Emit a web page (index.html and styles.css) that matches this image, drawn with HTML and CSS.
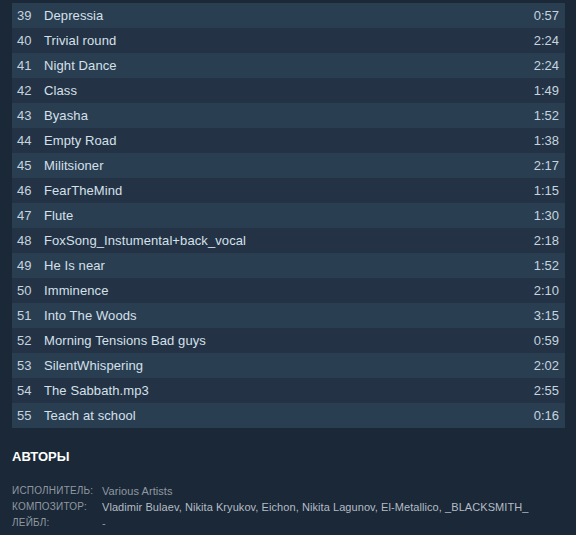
FILE: index.html
```html
<!DOCTYPE html>
<html>
<head>
	<meta charset="utf-8">
	<title>Soundtrack</title>
	<link rel="stylesheet" href="styles.css">
</head>
<body>

<div class='page'>
	<table class='tracks'>
		<tbody>
			<tr><td class='num'>39</td><td class='title'>Depressia</td><td class='len'>0:57</td></tr>
			<tr><td class='num'>40</td><td class='title'>Trivial round</td><td class='len'>2:24</td></tr>
			<tr><td class='num'>41</td><td class='title'>Night Dance</td><td class='len'>2:24</td></tr>
			<tr><td class='num'>42</td><td class='title'>Class</td><td class='len'>1:49</td></tr>
			<tr><td class='num'>43</td><td class='title'>Byasha</td><td class='len'>1:52</td></tr>
			<tr><td class='num'>44</td><td class='title'>Empty Road</td><td class='len'>1:38</td></tr>
			<tr><td class='num'>45</td><td class='title'>Militsioner</td><td class='len'>2:17</td></tr>
			<tr><td class='num'>46</td><td class='title'>FearTheMind</td><td class='len'>1:15</td></tr>
			<tr><td class='num'>47</td><td class='title'>Flute</td><td class='len'>1:30</td></tr>
			<tr><td class='num'>48</td><td class='title'>FoxSong_Instumental+back_vocal</td><td class='len'>2:18</td></tr>
			<tr><td class='num'>49</td><td class='title'>He Is near</td><td class='len'>1:52</td></tr>
			<tr><td class='num'>50</td><td class='title'>Imminence</td><td class='len'>2:10</td></tr>
			<tr><td class='num'>51</td><td class='title'>Into The Woods</td><td class='len'>3:15</td></tr>
			<tr><td class='num'>52</td><td class='title'>Morning Tensions Bad guys</td><td class='len'>0:59</td></tr>
			<tr><td class='num'>53</td><td class='title'>SilentWhispering</td><td class='len'>2:02</td></tr>
			<tr><td class='num'>54</td><td class='title'>The Sabbath.mp3</td><td class='len'>2:55</td></tr>
			<tr><td class='num'>55</td><td class='title'>Teach at school</td><td class='len'>0:16</td></tr>
		</tbody>
	</table>

	<h3 class='credits-head'>Авторы</h3>

	<div class='credits'>
		<div class='label'>Исполнитель:</div>
		<div class='value dim'>Various Artists</div>
		<div class='label'>Композитор:</div>
		<div class='value'>Vladimir Bulaev, Nikita Kryukov, Eichon, Nikita Lagunov, El-Metallico, _BLACKSMITH_</div>
		<div class='label'>Лейбл:</div>
		<div class='value dim'>-</div>
	</div>
</div>

</body>
</html>
```

FILE: styles.css
```css
body {
	margin: 0;
	background: #1b2838;
	font-family: 'Liberation Sans', Arial, sans-serif;
	color: #c6d4df;
}

.page {
	padding: 3px 11px 0 12px;
}

.tracks {
	width: 100%;
	border-collapse: collapse;
	font-size: 13px;
}

.tracks td {
	height: 25px;
	padding: 0;
	white-space: nowrap;
}

.tracks tr:nth-child(odd) {
	background: #2a3e52;
}

.tracks tr:nth-child(even) {
	background: #233345;
}

.tracks td.num {
	width: 27px;
	padding-left: 5px;
	color: #c6d4df;
}

.title {
	color: #d5e0ea;
	letter-spacing: 0.1px;
}

.tracks td.len {
	text-align: right;
	padding-right: 6px;
}

.credits-head {
	margin: 21px 0 0;
	font-size: 13px;
	font-weight: bold;
	color: #ffffff;
	text-transform: uppercase;
	line-height: 16px;
}

.credits {
	display: grid;
	grid-template-columns: 90px 1fr;
	margin-top: 18px;
	line-height: 16px;
}

.label {
	font-size: 10px;
	color: #8f98a0;
	text-transform: uppercase;
	letter-spacing: 0.2px;
}

.value {
	font-size: 11px;
	color: #b4bcc4;
	letter-spacing: 0.07px;
}

.value.dim {
	color: #8f98a0;
}
```
